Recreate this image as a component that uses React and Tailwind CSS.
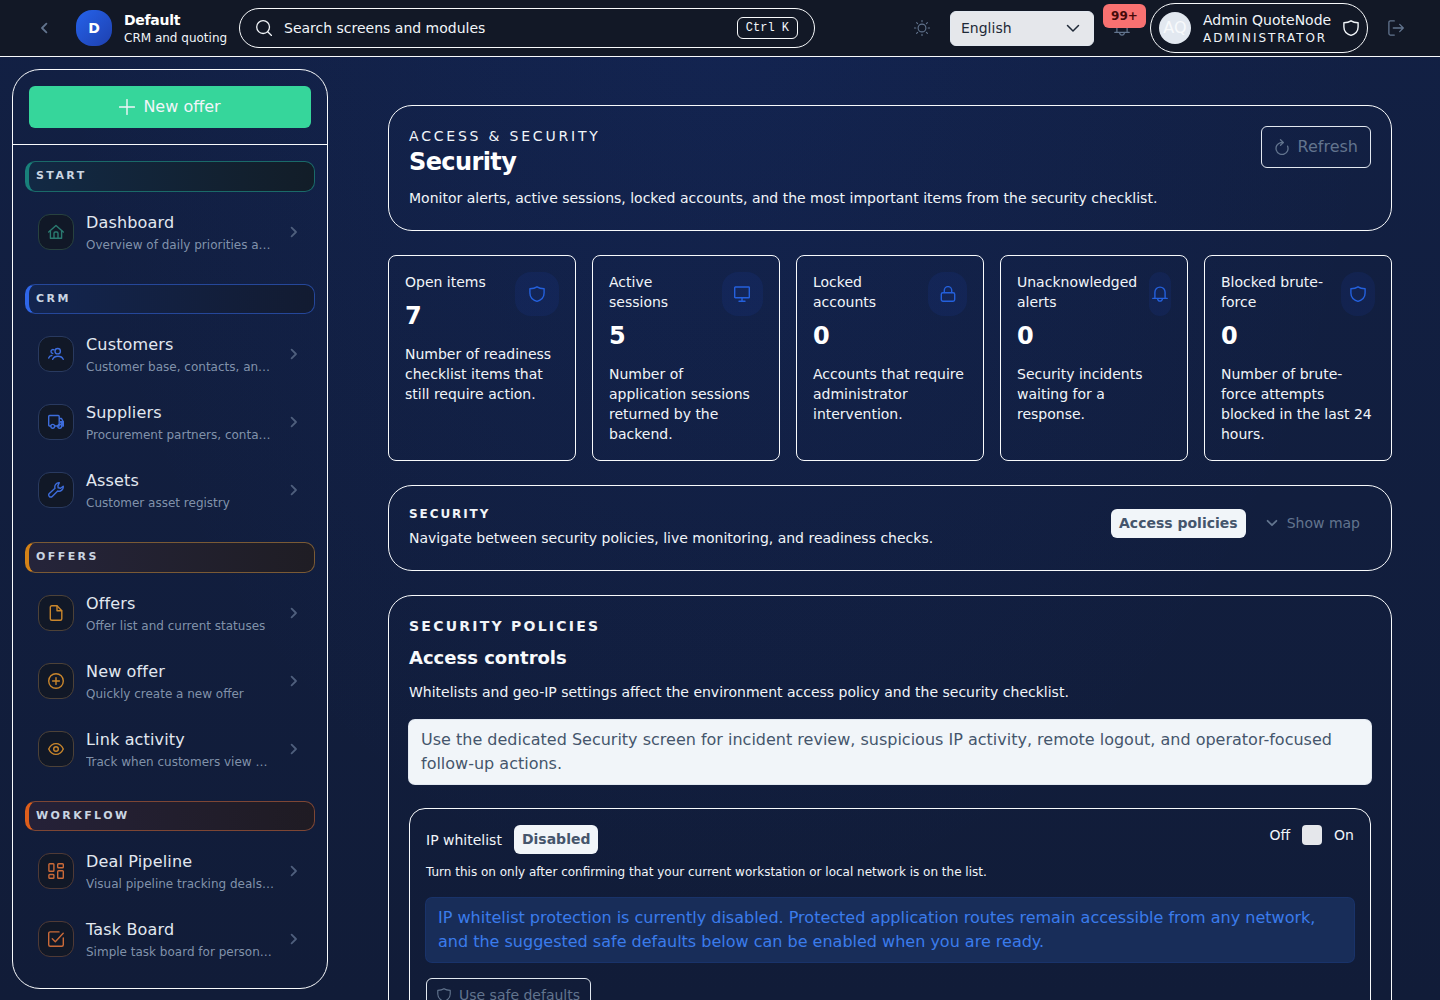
import React from 'react';

const icons = {
    home: (
        <>
            <path d="M.7 8 8 1.4 15.300 8" />
            <path d="M2.400 6.800v7.500h11.200V6.800" />
            <path d="M6 14.300V9.200c0-.7.5-1.200 1.200-1.200h1.600c.7 0 1.200.5 1.200 1.200v5.100" />
        </>
    ),
    users: (
        <>
            <circle cx="9.700" cy="5.200" r="2.700" />
            <path d="M4.700 13.300c.8-2 2.700-3 5.200-3s4.500 1 5.300 3" />
            <path d="M6 3.800c-1.500-.7-3 .2-3 1.700 0 1 .7 1.700 1.700 1.900M.7 12c.4-1.500 1.500-2.300 3.200-2.500" />
        </>
    ),
    truck: (
        <>
            <path d="M2.800 12H1.700A1 1 0 0 1 .7 11V2.500a1 1 0 0 1 1-1h8.500a1 1 0 0 1 1 1V12H6.600M11.200 4.500h2.300l1.800 3.300V12h-.9" />
            <path d="M12.500 7.600h2.700v3.200h-1.400z" fill="currentColor" />
            <circle cx="4.700" cy="12.300" r="1.900" />
            <circle cx="11.700" cy="12.300" r="1.900" />
        </>
    ),
    wrench: (
        <path d="M11.300.8a4.200 4.200 0 0 0-4.300 5.500L1.300 11.500a2 2 0 0 0 0 2.900 2 2 0 0 0 2.900 0L9.700 9A4.300 4.300 0 0 0 15.200 4.200L12.600 6.200 10.200 5.800 9.900 3.600z" />
    ),
    file: (
        <>
            <path d="M2.300 2.200c0-.8.6-1.500 1.500-1.500H9l4.800 5v8.100c0 .9-.6 1.500-1.500 1.500H3.800c-.9 0-1.500-.6-1.500-1.500z" />
            <path d="M9 .9v4.800h4.600" />
        </>
    ),
    plusCircle: (
        <>
            <circle cx="8" cy="8" r="7.300" />
            <path d="M8 4.600v6.800M4.600 8h6.800" />
        </>
    ),
    eye: (
        <>
            <path d="M.7 8C2.300 4.500 4.900 2.600 8 2.600s5.700 1.900 7.300 5.400c-1.600 3.500-4.200 5.400-7.300 5.400S2.300 11.500.7 8z" />
            <circle cx="8" cy="8" r="2.300" />
        </>
    ),
    grid: (
        <>
            <rect x=".9" y=".7" width="5" height="7.600" rx=".8" />
            <rect x="9.700" y=".7" width="5.600" height="4" rx=".8" />
            <rect x=".9" y="11.500" width="5" height="3.800" rx=".8" />
            <rect x="9.700" y="7.700" width="5.600" height="7.600" rx=".8" />
        </>
    ),
    check: (
        <>
            <path d="M11 .9H2.200C1.400.9.700 1.500.700 2.300v11.500c0 .8.700 1.500 1.500 1.500h11.600c.8 0 1.500-.7 1.500-1.500V7" />
            <path d="m4.300 7.700 3 3L15.200 2.300" />
        </>
    ),
    shield: <path d="M8 .8C6 2.100 3.400 2.600.9 2.700v4.200C.9 11 4 14 8 15.300c4-1.300 7.100-4.300 7.100-8.400V2.700C12.600 2.600 10 2.100 8 .8z" />,
    monitor: (
        <>
            <rect x=".7" y="1" width="14.600" height="10.800" rx=".6" />
            <path d="M8 11.800v3.400M5 15.200h6" />
        </>
    ),
    lock: (
        <>
            <rect x="1.300" y="6.700" width="13.400" height="8.500" rx="1.600" />
            <path d="M4.300 6.500V4.300a3.700 3.700 0 0 1 7.400 0v2.200" />
        </>
    ),
    bell: (
        <>
            <path d="M.8 12.400h14.400M2.900 12.200V6.200a5.100 5.100 0 0 1 10.200 0v6" />
            <path d="M5.500 12.600c.3 1.700 1.200 2.500 2.500 2.500s2.200-.8 2.500-2.500" />
        </>
    ),
    sun: (
        <>
            <circle cx="8" cy="8" r="3.900" />
            <path d="M8 .4v1.400M8 14.200v1.400M.4 8h1.400M14.200 8h1.400M2.600 2.600l1 1M12.400 12.400l1 1M2.600 13.400l1-1M12.400 3.600l1-1" />
        </>
    ),
    search: (
        <>
            <circle cx="7.100" cy="7.100" r="6.400" />
            <path d="m11.700 11.700 3.800 3.800" />
        </>
    ),
    logout: (
        <>
            <path d="M6.300.9H2.400C1.500.9.900 1.500.9 2.400v11.200c0 .9.600 1.500 1.500 1.500h3.900" />
            <path d="M5.300 8h10M11.700 4.400 15.300 8l-3.600 3.600" />
        </>
    ),
    refresh: (
        <>
            <path d="M13.600 7.200A6 6 0 1 1 6.600 3.600h2.600" />
            <path d="M6.500.8 9.300 3.500 6.500 6.300" />
        </>
    ),
    plus: <path d="M8 .6v14.800M.6 8h14.800" />,
    right: <path d="m5.600 3.600 4.400 4.400-4.400 4.400" />,
    left: <path d="m10.400 3.600-4.400 4.400 4.400 4.400" />,
    down: <path d="m2.500 5.500 5.500 5.500 5.500-5.500" />,
    downSmall: <path d="m3.600 5.800 4.400 4.400 4.400-4.400" />,
};

function Icon({ name, className = 'size-4', strokeWidth = 1.2 }) {
    return (
        <svg
            className={`shrink-0 ${className}`}
            viewBox="0 0 16 16"
            fill="none"
            stroke="currentColor"
            strokeWidth={strokeWidth}
            strokeLinecap="round"
            strokeLinejoin="round"
            aria-hidden="true"
        >
            {icons[name]}
        </svg>
    );
}

const groups = [
    {
        title: 'Start',
        bar: 'border-[#1a6a69] border-l-[#18807a] from-[#122944] to-[#121d28]',
        box: 'border-[#28423f] text-[#2a7a70]',
        items: [{ icon: 'home', label: 'Dashboard', text: 'Overview of daily priorities and alerts' }],
    },
    {
        title: 'CRM',
        bar: 'border-[#25479a] border-l-[#2f66e8] from-[#13254f] to-[#121b31]',
        box: 'border-[#293a60] text-[#3d6cdb]',
        items: [
            { icon: 'users', label: 'Customers', text: 'Customer base, contacts, and history' },
            { icon: 'truck', label: 'Suppliers', text: 'Procurement partners, contacts and terms' },
            { icon: 'wrench', label: 'Assets', text: 'Customer asset registry' },
        ],
    },
    {
        title: 'Offers',
        bar: 'border-[#7a5a35] border-l-[#d48217] from-[#25243a] to-[#1f1d24]',
        box: 'border-[#4d4238] text-[#c9862c]',
        items: [
            { icon: 'file', label: 'Offers', text: 'Offer list and current statuses' },
            { icon: 'plusCircle', label: 'New offer', text: 'Quickly create a new offer' },
            { icon: 'eye', label: 'Link activity', text: 'Track when customers view offers' },
        ],
    },
    {
        title: 'Workflow',
        bar: 'border-[#7d4634] border-l-[#dd5e1b] from-[#252138] to-[#1f1b23]',
        box: 'border-[#4f3a36] text-[#cb6a38]',
        items: [
            { icon: 'grid', label: 'Deal Pipeline', text: 'Visual pipeline tracking deals by stage' },
            { icon: 'check', label: 'Task Board', text: 'Simple task board for personal work' },
        ],
    },
];

const stats = [
    { label: 'Open items', value: 7, icon: 'shield', text: 'Number of readiness checklist items that still require action.' },
    { label: 'Active sessions', value: 5, icon: 'monitor', text: 'Number of application sessions returned by the backend.' },
    { label: 'Locked accounts', value: 0, icon: 'lock', text: 'Accounts that require administrator intervention.' },
    { label: 'Unacknowledged alerts', value: 0, icon: 'bell', text: 'Security incidents waiting for a response.' },
    { label: 'Blocked brute-force', value: 0, icon: 'shield', text: 'Number of brute-force attempts blocked in the last 24 hours.' },
];

function Topbar() {
    return (
        <header className="flex h-[57px] shrink-0 items-center border-b border-slate-50 bg-[#121826] pr-[35px] pl-9">
            <button type="button" className="text-slate-500">
                <Icon name="left" strokeWidth={1.8} />
            </button>
            <div className="ml-6 flex size-9 items-center justify-center rounded-2xl bg-linear-to-br from-[#2563eb] to-[#1e40af] text-sm font-bold text-white">
                D
            </div>
            <div className="ml-3 w-[115px] pt-px whitespace-nowrap">
                <div className="text-sm leading-[18px] font-bold tracking-[-0.02em] text-white">Default</div>
                <div className="mt-px text-xs leading-[17px]">CRM and quoting</div>
            </div>
            <div className="flex h-10 w-[576px] items-center rounded-full border border-slate-50 px-4">
                <Icon name="search" strokeWidth={1.3} />
                <span className="ml-3 flex-1 text-sm">Search screens and modules</span>
                <kbd className="rounded-md border border-slate-50 px-2 py-0.5 font-['Liberation_Mono',monospace] text-xs leading-4">Ctrl K</kbd>
            </div>
            <button type="button" className="ml-[99px] text-slate-500">
                <Icon name="sun" strokeWidth={1.1} />
            </button>
            <button type="button" className="ml-5 flex h-[35px] w-36 items-center justify-between rounded-md border border-slate-200 bg-[#e5e7eb] pr-3 pl-2.5 text-sm text-[#1f2937]">
                English
                <Icon name="down" strokeWidth={1.5} />
            </button>
            <button type="button" className="relative ml-5 text-slate-500">
                <Icon name="bell" strokeWidth={1.2} />
                <span className="absolute -top-4 -left-[11px] flex h-6 w-[43px] items-center justify-center rounded-md bg-[#f87171] text-xs font-bold text-[#450a0a]">
                    99+
                </span>
            </button>
            <div className="ml-5 flex h-[50px] w-[218px] items-center rounded-full border border-slate-50 pl-2">
                <div className="flex size-8 items-center justify-center rounded-full bg-slate-200 text-base text-slate-50">AQ</div>
                <div className="ml-3 flex-1 pt-px whitespace-nowrap">
                    <div className="text-sm leading-[18px]">Admin QuoteNode</div>
                    <div className="mt-px text-xs leading-[17px] tracking-[0.16em]">ADMINISTRATOR</div>
                </div>
                <Icon name="shield" className="mr-2 size-4" strokeWidth={1.4} />
            </div>
            <button type="button" className="ml-5 text-slate-500">
                <Icon name="logout" strokeWidth={1.3} />
            </button>
        </header>
    );
}

function Sidebar() {
    return (
        <aside className="mt-3 ml-3 flex h-[920px] w-[316px] shrink-0 flex-col overflow-hidden rounded-[28px] border border-slate-50">
            <div className="border-b border-slate-50 p-4">
                <button type="button" className="flex h-[42px] w-full items-center justify-center gap-2 rounded-md bg-[#36d69b] text-base text-slate-100">
                    <Icon name="plus" strokeWidth={1.4} />
                    New offer
                </button>
            </div>
            <nav className="px-3 pt-4">
                {groups.map((group) => (
                    <section key={group.title} className="mb-[17.75px]">
                        <h2
                            className={`mb-[6.25px] h-[30.5px] rounded-[10px] border border-l-4 bg-linear-to-r px-[7px] py-[6px] text-[11px] leading-[16.5px] font-bold tracking-[0.22em] text-slate-300 uppercase ${group.bar}`}
                        >
                            {group.title}
                        </h2>
                        {group.items.map((item) => (
                            <a key={item.label} href="#" className="flex h-[68px] items-center px-[13px]">
                                <span className={`flex size-9 shrink-0 items-center justify-center rounded-xl border bg-[#111827] ${group.box}`}>
                                    <Icon name={item.icon} strokeWidth={1.4} />
                                </span>
                                <span className="ml-3 w-[188px] min-w-0 pt-px">
                                    <span className="block text-base leading-6 tracking-[0.01em] text-slate-200">{item.label}</span>
                                    <span className="mt-px block truncate text-xs leading-[18px] text-slate-400/90">{item.text}</span>
                                </span>
                                <Icon name="right" className="ml-auto size-4 text-[#4f5f7d]" strokeWidth={1.8} />
                            </a>
                        ))}
                    </section>
                ))}
            </nav>
        </aside>
    );
}

function StatCard({ stat }) {
    return (
        <article className="rounded-lg border border-slate-50 p-4">
            <div className="flex items-start justify-between gap-3">
                <div>
                    <p className="text-sm">{stat.label}</p>
                    <p className="mt-2 text-2xl font-bold text-white">{stat.value}</p>
                </div>
                <div className="flex h-11 w-11 items-center justify-center rounded-2xl bg-[#1d4ed8]/10 text-[#2460dc]">
                    <Icon name={stat.icon} strokeWidth={1.4} />
                </div>
            </div>
            <p className="mt-3 text-sm">{stat.text}</p>
        </article>
    );
}

export default function App() {
    return (
        <div className="flex h-screen flex-col overflow-hidden bg-[radial-gradient(ellipse_at_50%_0%,rgba(29,78,216,0.09),transparent_65%),linear-gradient(180deg,#122044_0%,#111c38_100%)] font-['DejaVu_Sans',sans-serif] text-slate-100">
            <Topbar />
            <div className="flex min-h-0 flex-1">
                <Sidebar />
                <main className="flex min-w-0 flex-1 flex-col gap-6 overflow-hidden pt-12 pr-12 pl-[60px]">
                    <section className="flex shrink-0 items-start justify-between rounded-3xl border border-slate-50 p-5">
                        <div>
                            <p className="text-sm tracking-[0.2em]">ACCESS &amp; SECURITY</p>
                            <h1 className="text-2xl font-bold tracking-[-0.025em] text-white">Security</h1>
                            <p className="mt-2 text-sm leading-6">
                                Monitor alerts, active sessions, locked accounts, and the most important items from the security checklist.
                            </p>
                        </div>
                        <button type="button" className="flex h-[42px] items-center gap-2 rounded-md border border-slate-200 px-3 text-base text-slate-500">
                            <Icon name="refresh" strokeWidth={1.3} />
                            Refresh
                        </button>
                    </section>

                    <section className="grid h-[206px] shrink-0 grid-cols-5 gap-4">
                        {stats.map((stat) => (
                            <StatCard key={stat.label} stat={stat} />
                        ))}
                    </section>

                    <section className="flex h-[86px] shrink-0 items-start justify-between rounded-3xl border border-slate-50 p-5">
                        <div>
                            <h2 className="text-xs font-bold tracking-[0.16em]">SECURITY</h2>
                            <p className="mt-1 text-sm leading-6">Navigate between security policies, live monitoring, and readiness checks.</p>
                        </div>
                        <div className="mt-[3px] flex items-start">
                            <span className="rounded-md bg-slate-100 px-2 py-1 text-sm leading-[21px] font-bold text-slate-600">Access policies</span>
                            <button type="button" className="mt-1 ml-[18px] flex items-center gap-[7px] pr-[11px] text-sm text-slate-500">
                                <Icon name="downSmall" strokeWidth={1.8} />
                                Show map
                            </button>
                        </div>
                    </section>

                    <section className="h-[600px] shrink-0 rounded-3xl border border-slate-50 p-5">
                        <p className="text-sm font-bold tracking-[0.16em]">SECURITY POLICIES</p>
                        <h2 className="mt-2 text-lg font-bold text-slate-50">Access controls</h2>
                        <p className="mt-2 text-sm leading-6">Whitelists and geo-IP settings affect the environment access policy and the security checklist.</p>
                        <div className="mt-4 rounded-md bg-slate-100 px-3 py-2 text-base text-slate-600 ring-1 ring-slate-200">
                            Use the dedicated Security screen for incident review, suspicious IP activity, remote logout, and operator-focused follow-up actions.
                        </div>

                        <div className="mt-6 h-[400px] rounded-2xl border border-slate-50 p-4">
                            <div className="flex items-start justify-between text-sm">
                                <div className="flex items-center gap-3">
                                    <span>IP whitelist</span>
                                    <span className="rounded-md bg-slate-100 px-2 py-1 leading-[21px] font-bold text-slate-600">Disabled</span>
                                </div>
                                <div className="flex items-center gap-3">
                                    <span>Off</span>
                                    <span className="size-5 rounded bg-[#e5e7eb]" />
                                    <span>On</span>
                                </div>
                            </div>
                            <p className="mt-2 text-xs leading-5">Turn this on only after confirming that your current workstation or local network is on the list.</p>
                            <div className="mt-4 rounded-md bg-[#182d59] px-3 py-2 text-base text-[#3b7cec] ring-1 ring-[#19336a]">
                                IP whitelist protection is currently disabled. Protected application routes remain accessible from any network, and the suggested safe defaults below can be enabled when you are ready.
                            </div>
                            <button type="button" className="mt-4 flex h-[34px] items-center gap-2 rounded-md border border-slate-200 px-2.5 text-sm text-slate-500">
                                <Icon name="shield" className="size-3.5" strokeWidth={1.3} />
                                Use safe defaults
                            </button>
                        </div>
                    </section>
                </main>
            </div>
        </div>
    );
}
